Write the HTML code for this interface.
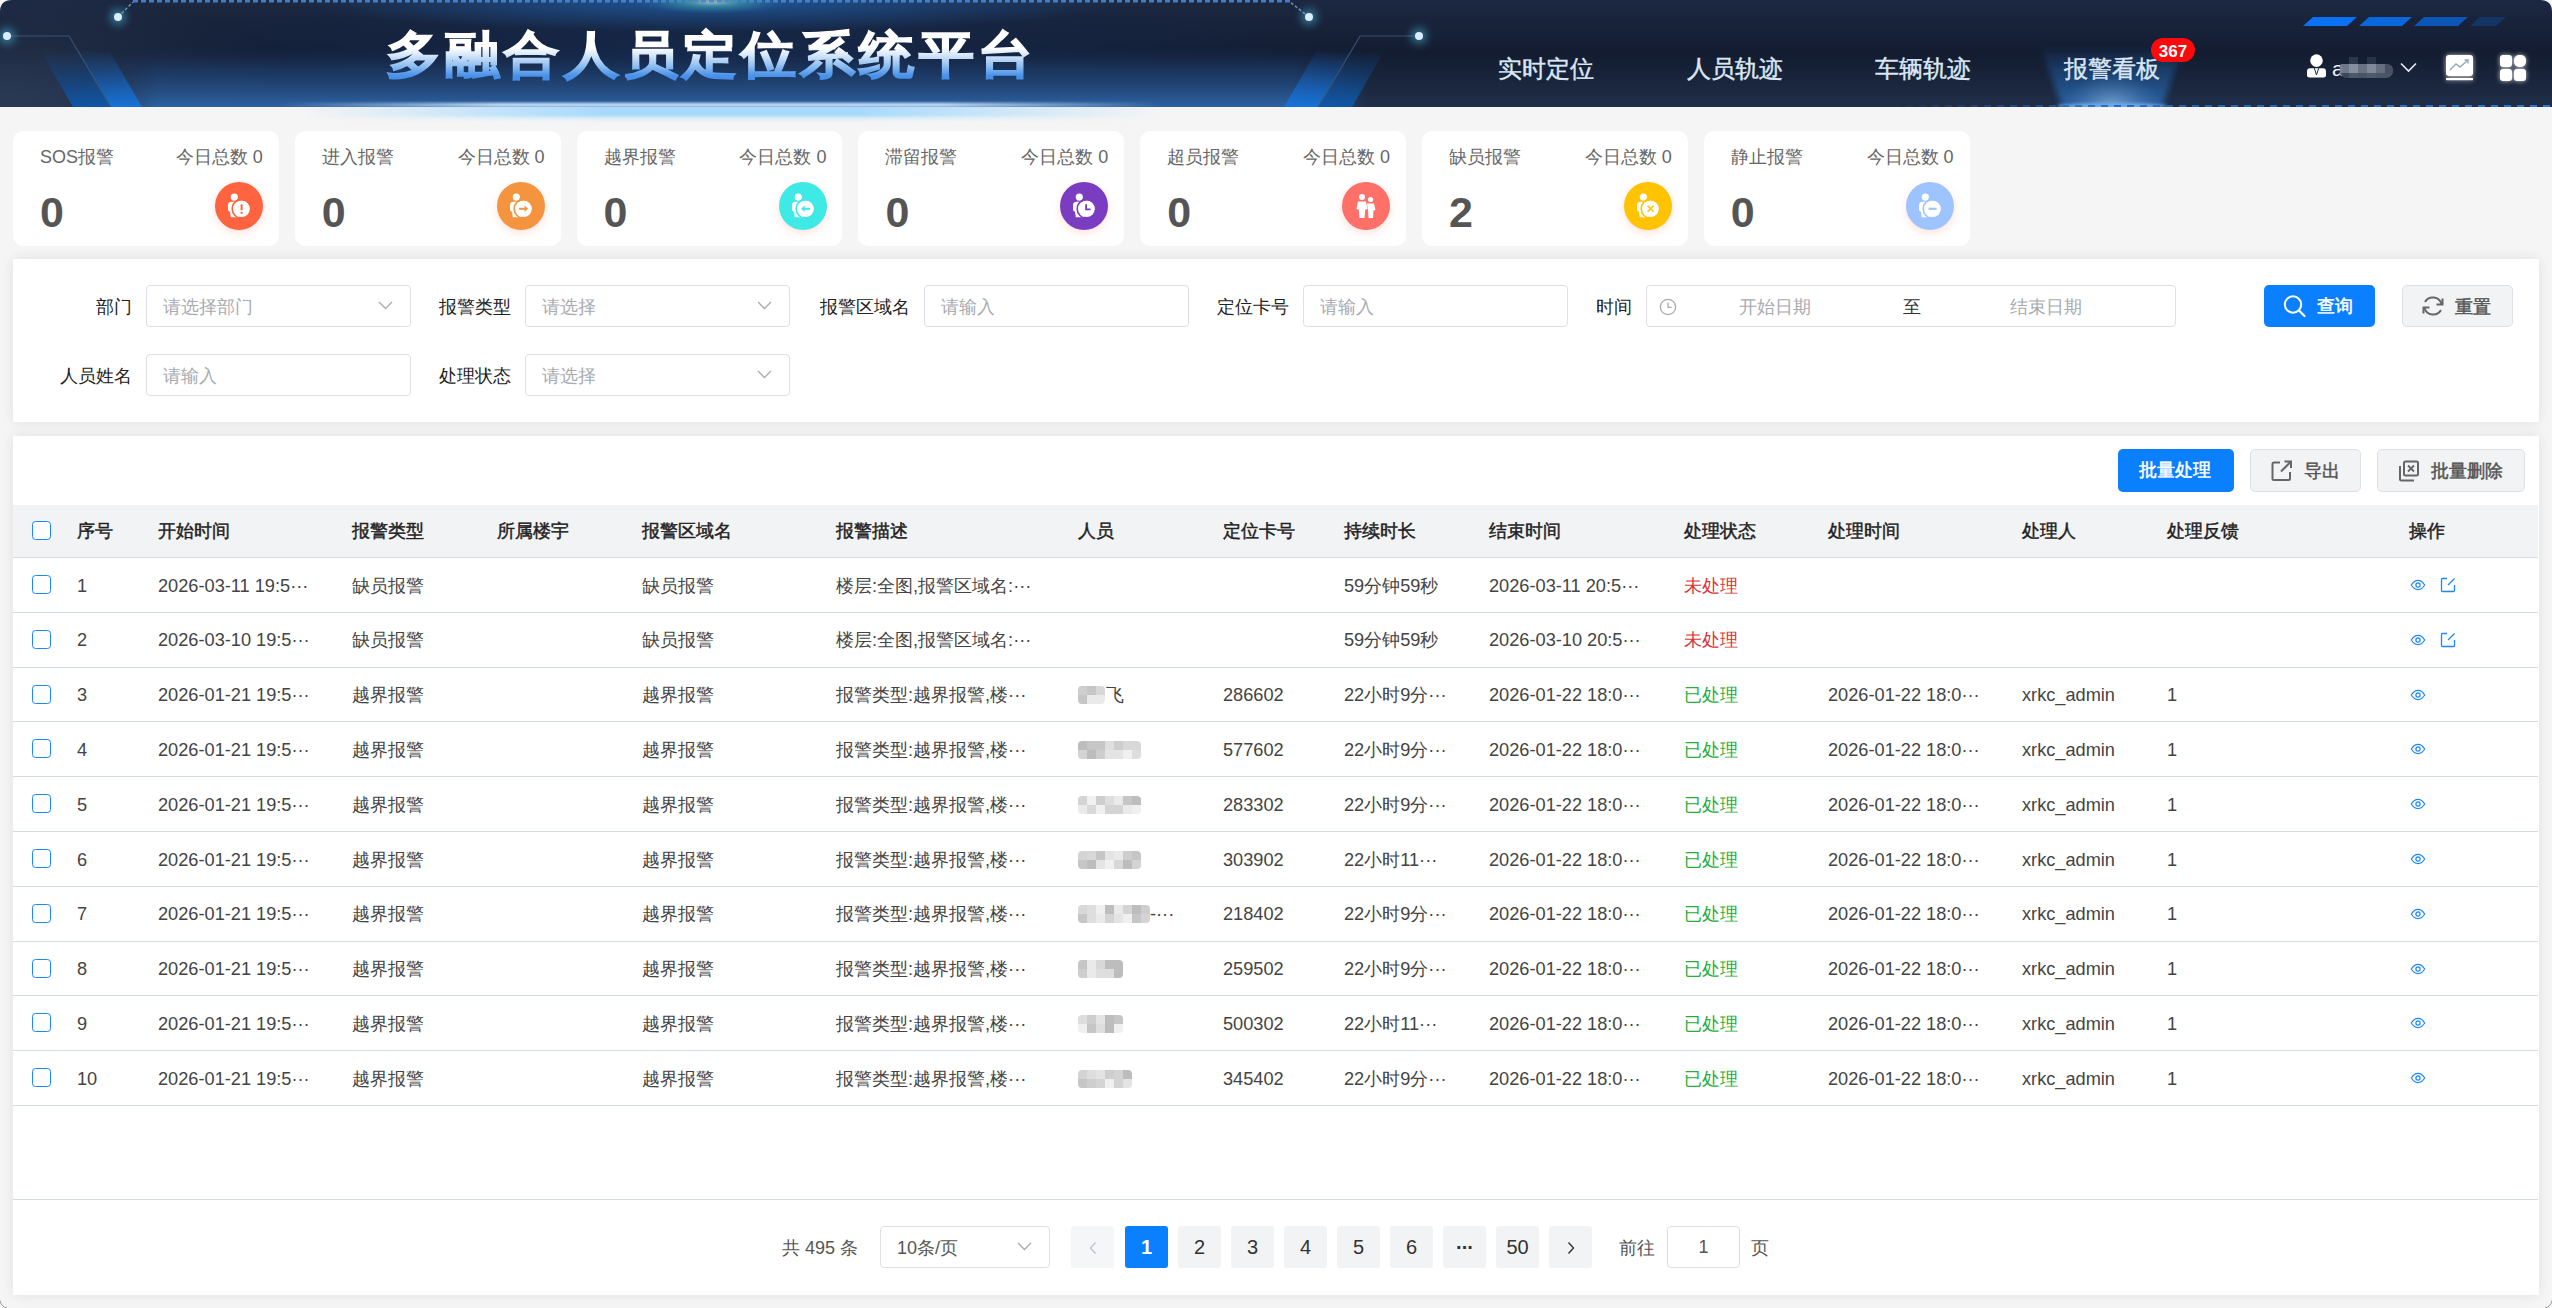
<!DOCTYPE html>
<html><head><meta charset="utf-8">
<style>
*{box-sizing:border-box;margin:0;padding:0}
html,body{width:2552px;height:1308px;overflow:hidden}
body{position:relative;background:#f5f5f5;font-family:"Liberation Sans",sans-serif;font-size:18px;color:#333}
.abs{position:absolute}
/* header */
#hdr{position:absolute;left:0;top:0;width:2552px;height:124px;overflow:visible}
.title{position:absolute;left:386px;top:23px;font-size:50px;font-weight:700;letter-spacing:3.8px;line-height:64px;white-space:nowrap;transform:scaleX(1.1);transform-origin:0 0;
 background:linear-gradient(180deg,#ffffff 0%,#ffffff 38%,#d6e7fa 50%,#8cbcf0 68%,#4b92e8 82%,#3a86e4 100%);-webkit-background-clip:text;background-clip:text;color:transparent;-webkit-text-stroke:1.4px transparent}
.nav{position:absolute;top:53px;font-size:24px;line-height:32px;color:#dbe7f5;white-space:nowrap;font-weight:400;-webkit-text-stroke:0.4px #dbe7f5}
.badge{position:absolute;left:2151px;top:38px;width:44px;height:24px;border-radius:12px;background:#fa0a0a;color:#fff;font-size:17px;font-weight:700;text-align:center;line-height:27px;overflow:hidden}
/* cards */
.card{position:absolute;top:131px;width:265.8px;height:115px;background:#fff;border-radius:10px}
.card .t{position:absolute;left:27px;top:14px;font-size:18px;line-height:24px;color:#666;white-space:nowrap}
.card .r{position:absolute;right:16px;top:14px;font-size:18px;line-height:24px;color:#666;white-space:nowrap}
.card .n{position:absolute;left:27px;top:56px;font-size:43px;line-height:50px;font-weight:700;color:#555}
.card .ic{position:absolute;left:202px;top:51px;width:48px;height:48px;border-radius:50%}
/* panels */
.panel{position:absolute;left:13px;width:2526px;background:#fff;box-shadow:0 0 12px rgba(0,0,0,.09)}
.lbl{position:absolute;font-size:18px;line-height:24px;color:#222;white-space:nowrap;text-align:right}
.inp{position:absolute;height:42px;border:1px solid #dcdfe6;border-radius:4px;background:#fff}
.ph{position:absolute;left:16px;top:9px;font-size:18px;line-height:24px;color:#a8abb2;white-space:nowrap}
.chev{position:absolute;right:17px;top:15px}
.btn{position:absolute;height:42px;border-radius:5px;white-space:nowrap;font-size:18px;line-height:24px}
/* table */
.th{position:absolute;top:0;height:52px;line-height:52px;font-size:18.2px;font-weight:400;-webkit-text-stroke:0.45px #222;color:#222;white-space:nowrap}
.row{position:absolute;left:0;width:2525px;height:54.8px;border-bottom:1px solid #d5dbe3}
.cell{position:absolute;top:1.6px;line-height:53.8px;font-size:18.2px;color:#444;white-space:nowrap}
.cb{position:absolute;left:19px;width:18.5px;height:19px;border:1.6px solid #1a86ff;border-radius:3.5px;background:#fff}
.mz{display:inline-block;position:relative;vertical-align:-3px;overflow:hidden;border-radius:4px}.mz i{position:absolute;width:9px;height:9px}
.pg{position:absolute;top:1226px;width:43px;height:42px;border-radius:3px;background:#f2f3f5;text-align:center;line-height:42px;color:#333;font-size:20px}
</style></head><body>

<!-- HEADER -->
<div id="hdr">
<svg width="2552" height="124" viewBox="0 0 2552 124" style="position:absolute;left:0;top:0">
<defs>
 <linearGradient id="hbase" x1="0" y1="0" x2="0" y2="1">
  <stop offset="0" stop-color="#1c2842"/><stop offset="0.5" stop-color="#131c30"/><stop offset="1" stop-color="#202e47"/>
 </linearGradient>
 <radialGradient id="tl" cx="0" cy="0" r="1" gradientUnits="userSpaceOnUse" gradientTransform="translate(0 100) scale(300 110)">
  <stop offset="0" stop-color="#2a3954" stop-opacity="1"/><stop offset="1" stop-color="#2a3954" stop-opacity="0"/>
 </radialGradient>
 <linearGradient id="cglow" x1="0" y1="0" x2="0" y2="1">
  <stop offset="0" stop-color="#17284a" stop-opacity="0"/><stop offset="0.4" stop-color="#1c3a66" stop-opacity=".75"/><stop offset="1" stop-color="#2d62a2" stop-opacity="1"/>
 </linearGradient>
 <linearGradient id="cgx" x1="0" y1="0" x2="1" y2="0">
  <stop offset="0" stop-color="#fff" stop-opacity="0"/><stop offset=".06" stop-color="#fff" stop-opacity="1"/><stop offset=".94" stop-color="#fff" stop-opacity="1"/><stop offset="1" stop-color="#fff" stop-opacity="0"/>
 </linearGradient>
 <mask id="cgm"><rect x="80" y="45" width="1290" height="62" fill="url(#cgx)"/></mask>
 <radialGradient id="cmid" cx="0" cy="0" r="1" gradientUnits="userSpaceOnUse" gradientTransform="translate(720 50) scale(650 60)">
  <stop offset="0" stop-color="#15284a" stop-opacity="1"/><stop offset="1" stop-color="#15284a" stop-opacity="0"/>
 </radialGradient>
 <radialGradient id="ctop" cx="0" cy="0" r="1" gradientUnits="userSpaceOnUse" gradientTransform="translate(712 2) scale(75 12)">
  <stop offset="0" stop-color="#a8b4c4" stop-opacity="1"/><stop offset=".35" stop-color="#3a94a4" stop-opacity=".8"/><stop offset="1" stop-color="#2a6aa0" stop-opacity="0"/>
 </radialGradient>
 <radialGradient id="ctop2" cx="0" cy="0" r="1" gradientUnits="userSpaceOnUse" gradientTransform="translate(712 0) scale(420 32)">
  <stop offset="0" stop-color="#1f5aa0" stop-opacity=".95"/><stop offset="1" stop-color="#1f5aa0" stop-opacity="0"/>
 </radialGradient>
 <linearGradient id="parad" x1="0" y1="0" x2="0" y2="1"><stop offset="0" stop-color="#0f4c92" stop-opacity="0"/><stop offset=".4" stop-color="#0f4c92" stop-opacity=".4"/><stop offset="1" stop-color="#0f56a8" stop-opacity="1"/></linearGradient>
 <linearGradient id="para" x1="0" y1="0" x2="0" y2="1">
  <stop offset="0" stop-color="#1672d8" stop-opacity="0"/><stop offset=".35" stop-color="#1466c4" stop-opacity=".35"/><stop offset="1" stop-color="#1672d8" stop-opacity="1"/>
 </linearGradient>
 <linearGradient id="beam" x1="0" y1="0" x2="0" y2="1">
  <stop offset="0" stop-color="#1d4f8a" stop-opacity="0"/><stop offset=".45" stop-color="#1d4f8a" stop-opacity=".65"/><stop offset="1" stop-color="#2c64a6" stop-opacity="1"/>
 </linearGradient>
 <radialGradient id="beamglow" cx="0" cy="0" r="1" gradientUnits="userSpaceOnUse" gradientTransform="translate(2112 107) scale(50 34)">
  <stop offset="0" stop-color="#9cc0e4" stop-opacity=".7"/><stop offset="1" stop-color="#4f86c0" stop-opacity="0"/>
 </radialGradient>
 <linearGradient id="below" x1="0" y1="0" x2="0" y2="1">
  <stop offset="0" stop-color="#acd6ff" stop-opacity="1"/><stop offset=".5" stop-color="#98d6fb" stop-opacity=".85"/><stop offset="1" stop-color="#e8f2fa" stop-opacity="0"/>
 </linearGradient>
 <linearGradient id="belowx" x1="0" y1="0" x2="1" y2="0">
  <stop offset="0" stop-color="#fff" stop-opacity="0"/><stop offset=".35" stop-color="#fff" stop-opacity="1"/><stop offset=".65" stop-color="#fff" stop-opacity="1"/><stop offset="1" stop-color="#fff" stop-opacity="0"/>
 </linearGradient>
 <mask id="bm"><rect x="300" y="107" width="860" height="17" fill="url(#belowx)"/></mask>
 <linearGradient id="linex" x1="0" y1="0" x2="1" y2="0">
  <stop offset="0" stop-color="#d2ecff" stop-opacity="0"/><stop offset=".25" stop-color="#d2ecff" stop-opacity="1"/><stop offset=".75" stop-color="#d2ecff" stop-opacity="1"/><stop offset="1" stop-color="#d2ecff" stop-opacity="0"/>
 </linearGradient>
 <filter id="blur2" x="-50%" y="-50%" width="200%" height="200%"><feGaussianBlur stdDeviation="1.5"/></filter>
 <filter id="blur3" x="-50%" y="-50%" width="200%" height="200%"><feGaussianBlur stdDeviation="3"/></filter>
 <filter id="blur4" x="-50%" y="-50%" width="200%" height="200%"><feGaussianBlur stdDeviation="4"/></filter>
 <linearGradient id="dashg" x1="1880" y1="0" x2="2552" y2="0" gradientUnits="userSpaceOnUse"><stop offset="0" stop-color="#1f66c0" stop-opacity="0"/><stop offset=".35" stop-color="#1f66c0" stop-opacity=".9"/><stop offset="1" stop-color="#2a78d8" stop-opacity="1"/></linearGradient>
 <clipPath id="hclip"><path d="M12 0H2540Q2552 0 2552 12V107H0V12Q0 0 12 0Z"/></clipPath>
</defs>
<g clip-path="url(#hclip)">
 <rect x="0" y="0" width="2552" height="107" fill="url(#hbase)"/>
 <rect x="0" y="0" width="700" height="107" fill="url(#tl)"/>
 <rect x="0" y="0" width="1500" height="107" fill="url(#cmid)"/>
 <rect x="80" y="45" width="1290" height="62" fill="url(#cglow)" mask="url(#cgm)"/>
 <rect x="0" y="0" width="1600" height="50" fill="url(#ctop2)"/>
 <rect x="500" y="0" width="400" height="20" fill="url(#ctop)"/>
 <!-- parallelograms -->
 <polygon points="40,50 77,50 111,107 73,107" fill="url(#parad)"/><polygon points="77,50 109,50 142,107 111,107" fill="url(#para)"/>
 <polygon points="1317,50 1351,50 1318,107 1284,107" fill="url(#para)"/><polygon points="1351,50 1385,50 1352,107 1318,107" fill="url(#parad)"/>
 <!-- thin lines -->
 <polyline points="7,36 69,36 111,107" fill="none" stroke="#3e5a80" stroke-width="1.2" opacity=".8"/>
 <polyline points="1419,36 1360,36 1318,107" fill="none" stroke="#3e5a80" stroke-width="1.2" opacity=".8"/>
 <!-- dashed top -->
 <line x1="133" y1="1.2" x2="1290" y2="1.2" stroke="#4a86cf" stroke-width="2.4" stroke-dasharray="5 3" opacity=".9"/>
 <line x1="118" y1="17" x2="133" y2="2" stroke="#6d8fb8" stroke-width="1.5" stroke-dasharray="3 2"/>
 <line x1="1309" y1="17" x2="1290" y2="2" stroke="#6d8fb8" stroke-width="1.5" stroke-dasharray="3 2"/>
 <!-- dots -->
 <g>
  <circle cx="118" cy="17" r="8" fill="#4ab4d8" opacity=".55" filter="url(#blur4)"/>
  <circle cx="118" cy="17" r="4" fill="#d8eeff"/>
  <circle cx="7" cy="36" r="8" fill="#4ab4d8" opacity=".55" filter="url(#blur4)"/>
  <circle cx="7" cy="36" r="4" fill="#d8eeff"/>
  <circle cx="1309" cy="17" r="8" fill="#4ab4d8" opacity=".55" filter="url(#blur4)"/>
  <circle cx="1309" cy="17" r="4" fill="#d8eeff"/>
  <circle cx="1419" cy="36" r="8" fill="#4ab4d8" opacity=".55" filter="url(#blur4)"/>
  <circle cx="1419" cy="36" r="4" fill="#d8eeff"/>
 </g>
 <!-- active tab beam -->
 <polygon points="2040,45 2184,45 2162,107 2062,107" fill="url(#beam)" filter="url(#blur3)"/>
 <rect x="2040" y="60" width="150" height="47" fill="url(#beamglow)"/>
 <ellipse cx="2112" cy="106" rx="55" ry="3" fill="#6aa8f0" filter="url(#blur2)"/>
 <!-- bottom bright line center -->
 <rect x="280" y="103" width="880" height="4" fill="url(#linex)" filter="url(#blur2)"/>
 <!-- right bottom line -->
 <line x1="1880" y1="106" x2="2552" y2="106" stroke="url(#dashg)" stroke-width="2.2" stroke-dasharray="7 6"/>
 <!-- stripes -->
 <polygon points="2303,26 2313,17 2357,17 2347,26" fill="#0a72f2"/>
 <polygon points="2359,26 2369,17 2412,17 2402,26" fill="#0b68dc"/>
 <polygon points="2414,26 2424,17 2468,17 2458,26" fill="#0c56b6"/>
 <polygon points="2470,26 2480,17 2506,17 2496,26" fill="#0f3d78" opacity=".7"/>
</g>
<!-- glow below header -->
<rect x="300" y="107" width="860" height="16" fill="url(#below)" mask="url(#bm)"/>
</svg>
<div class="title">多融合人员定位系统平台</div>
<div class="nav" style="left:1498px">实时定位</div>
<div class="nav" style="left:1687px">人员轨迹</div>
<div class="nav" style="left:1875px">车辆轨迹</div>
<div class="nav" style="left:2064px">报警看板</div>
<div class="badge">367</div>
<!-- user -->
<svg class="abs" style="left:2305px;top:52px" width="24" height="28" viewBox="0 0 24 28">
 <circle cx="11.5" cy="8.6" r="6.3" fill="#fff"/>
 <path d="M5 16.2H18Q21 16.2 21 19.2V23.3Q21 25.4 19 25.4H4Q2 25.4 2 23.3V19.2Q2 16.2 5 16.2Z" fill="#fff"/>
 <path d="M9.3 16.2L11.5 23L13.7 16.2" fill="none" stroke="#1b2a42" stroke-width="1"/>
</svg>
<div class="abs" style="left:2332px;top:57px;font-size:21px;line-height:24px;color:#f2f6fb;">a</div>
<div class="abs" style="left:2340px;top:57px;width:53px;height:21px;opacity:.95">
<div class="abs" style="left:9px;top:0;width:9px;height:8px;background:#2f3a4e"></div>
<div class="abs" style="left:27px;top:0;width:9px;height:8px;background:#2a3549"></div>
<div class="abs" style="left:0;top:7px;width:53px;height:14px;background:#4c5769;border-radius:2px 6px 7px 7px;overflow:hidden">
<i class="abs" style="left:0;top:0;width:9px;height:9px;background:#737d8e"></i>
<i class="abs" style="left:9px;top:0;width:9px;height:9px;background:#8a94a3"></i>
<i class="abs" style="left:18px;top:0;width:9px;height:9px;background:#6d7788"></i>
<i class="abs" style="left:27px;top:0;width:9px;height:9px;background:#858f9e"></i>
<i class="abs" style="left:36px;top:0;width:9px;height:9px;background:#6a7484"></i>
<i class="abs" style="left:45px;top:0;width:8px;height:9px;background:#4a5466"></i>
<i class="abs" style="left:0;top:9px;width:9px;height:5px;background:#3e495b"></i>
<i class="abs" style="left:9px;top:9px;width:9px;height:5px;background:#4f5a6c"></i>
<i class="abs" style="left:27px;top:9px;width:9px;height:5px;background:#525d6f"></i>
</div></div>
<svg class="abs" style="left:2400px;top:62px" width="17" height="11" viewBox="0 0 17 11"><path d="M1 1.5L8.5 9L16 1.5" fill="none" stroke="#e6eef8" stroke-width="1.6"/></svg>
<!-- chart icon -->
<svg class="abs" style="left:2442px;top:50px;filter:drop-shadow(0 0 2.5px rgba(255,255,255,.75))" width="36" height="34" viewBox="0 0 36 34">
 <g filter="url(#g1)">
 <rect x="4" y="5" width="27" height="21" rx="3" fill="#fff"/>
 <path d="M8 20L14 14L18 17L26 10" fill="none" stroke="#9aa8bb" stroke-width="1.4"/>
 <path d="M22.5 10H26V13.5" fill="none" stroke="#9aa8bb" stroke-width="1.4"/>
 <rect x="4" y="28" width="27" height="2.2" fill="#fff"/>
 </g>
</svg>
<!-- grid icon -->
<svg class="abs" style="left:2496px;top:51px;filter:drop-shadow(0 0 2.5px rgba(255,255,255,.75))" width="34" height="34" viewBox="0 0 34 34">
 <rect x="4" y="4" width="12" height="12" rx="3" fill="#fff"/>
 <rect x="18" y="4" width="12" height="12" rx="5" fill="#fff"/>
 <rect x="4" y="18" width="12" height="12" rx="3" fill="#fff"/>
 <rect x="18" y="18" width="12" height="12" rx="3" fill="#fff"/>
</svg>
</div>


<!-- CARDS -->
<div class="card" style="left:13.0px"><div class="t">SOS报警</div><div class="r">今日总数 0</div><div class="n">0</div><div class="ic" style="background:#ff6340;box-shadow:0 3px 9px rgba(255,110,80,.2)"><svg width="48" height="48" viewBox="0 0 48 48"><circle cx="19.3" cy="15.1" r="3.6" fill="#fff"/><path d="M16.5 19.8H24V35.2H15.8L15 29.8Q13 29.3 13 27.5V23.3Q13 19.8 16.5 19.8Z" fill="#fff"/><circle cx="26.6" cy="26.8" r="8.3" fill="#fff"/><circle cx="26.6" cy="26.8" r="9.4" fill="none" stroke="#ff6340" stroke-width="1.6"/><rect x="25.6" y="22.3" width="2" height="6" fill="#ff6340"/><rect x="25.6" y="29.8" width="2" height="2" fill="#ff6340"/></svg></div></div>
<div class="card" style="left:294.8px"><div class="t">进入报警</div><div class="r">今日总数 0</div><div class="n">0</div><div class="ic" style="background:#f4943e;box-shadow:0 3px 9px rgba(255,110,80,.2)"><svg width="48" height="48" viewBox="0 0 48 48"><circle cx="19.3" cy="15.1" r="3.6" fill="#fff"/><path d="M16.5 19.8H24V35.2H15.8L15 29.8Q13 29.3 13 27.5V23.3Q13 19.8 16.5 19.8Z" fill="#fff"/><circle cx="26.6" cy="26.8" r="8.3" fill="#fff"/><circle cx="26.6" cy="26.8" r="9.4" fill="none" stroke="#f4943e" stroke-width="1.6"/><path d="M22.1 26.8H28.6" stroke="#f4943e" stroke-width="2"/><path d="M27.6 23.6L31.1 26.8L27.6 30Z" fill="#f4943e"/></svg></div></div>
<div class="card" style="left:576.6px"><div class="t">越界报警</div><div class="r">今日总数 0</div><div class="n">0</div><div class="ic" style="background:#3fe9e5;box-shadow:0 3px 9px rgba(255,110,80,.2)"><svg width="48" height="48" viewBox="0 0 48 48"><circle cx="19.3" cy="15.1" r="3.6" fill="#fff"/><path d="M16.5 19.8H24V35.2H15.8L15 29.8Q13 29.3 13 27.5V23.3Q13 19.8 16.5 19.8Z" fill="#fff"/><circle cx="26.6" cy="26.8" r="8.3" fill="#fff"/><circle cx="26.6" cy="26.8" r="9.4" fill="none" stroke="#3fe9e5" stroke-width="1.6"/><path d="M24.6 26.8H31.1" stroke="#3fe9e5" stroke-width="2"/><path d="M25.6 23.6L22.1 26.8L25.6 30Z" fill="#3fe9e5"/></svg></div></div>
<div class="card" style="left:858.4px"><div class="t">滞留报警</div><div class="r">今日总数 0</div><div class="n">0</div><div class="ic" style="background:#7a3dc2;box-shadow:0 3px 9px rgba(255,110,80,.2)"><svg width="48" height="48" viewBox="0 0 48 48"><circle cx="19.3" cy="15.1" r="3.6" fill="#fff"/><path d="M16.5 19.8H24V35.2H15.8L15 29.8Q13 29.3 13 27.5V23.3Q13 19.8 16.5 19.8Z" fill="#fff"/><circle cx="26.6" cy="26.8" r="8.3" fill="#fff"/><circle cx="26.6" cy="26.8" r="9.4" fill="none" stroke="#7a3dc2" stroke-width="1.6"/><path d="M26.1 22.3V27.3H30.6" fill="none" stroke="#7a3dc2" stroke-width="1.8"/></svg></div></div>
<div class="card" style="left:1140.2px"><div class="t">超员报警</div><div class="r">今日总数 0</div><div class="n">0</div><div class="ic" style="background:#ff7068;box-shadow:0 3px 9px rgba(255,110,80,.2)"><svg width="48" height="48" viewBox="0 0 48 48"><circle cx="20" cy="15" r="3" fill="#fff"/><path d="M16 19.5H24L25.5 27L23.3 27.5L22.5 36H17.5L16.7 27.5L14.5 27Z" fill="#fff"/><circle cx="28.5" cy="17.5" r="2.6" fill="#fff"/><path d="M25 21.5H32L33.5 28L31.5 28.5L31 36H26.5L26 28.5Z" fill="#fff"/></svg></div></div>
<div class="card" style="left:1422.0px"><div class="t">缺员报警</div><div class="r">今日总数 0</div><div class="n">2</div><div class="ic" style="background:#ffc300;box-shadow:0 3px 9px rgba(255,110,80,.2)"><svg width="48" height="48" viewBox="0 0 48 48"><circle cx="19.3" cy="15.1" r="3.6" fill="#fff"/><path d="M16.5 19.8H24V35.2H15.8L15 29.8Q13 29.3 13 27.5V23.3Q13 19.8 16.5 19.8Z" fill="#fff"/><circle cx="26.6" cy="26.8" r="8.3" fill="#fff"/><circle cx="26.6" cy="26.8" r="9.4" fill="none" stroke="#ffc300" stroke-width="1.6"/><path d="M23.6 23.8L29.6 29.8M29.6 23.8L23.6 29.8" stroke="#ffc300" stroke-width="1.6"/></svg></div></div>
<div class="card" style="left:1703.8px"><div class="t">静止报警</div><div class="r">今日总数 0</div><div class="n">0</div><div class="ic" style="background:#9dc4ff;box-shadow:0 3px 9px rgba(255,110,80,.2)"><svg width="48" height="48" viewBox="0 0 48 48"><circle cx="19.3" cy="15.1" r="3.6" fill="#fff"/><path d="M16.5 19.8H24V35.2H15.8L15 29.8Q13 29.3 13 27.5V23.3Q13 19.8 16.5 19.8Z" fill="#fff"/><circle cx="26.6" cy="26.8" r="8.3" fill="#fff"/><circle cx="26.6" cy="26.8" r="9.4" fill="none" stroke="#9dc4ff" stroke-width="1.6"/><path d="M22.6 26.8H30.6" stroke="#9dc4ff" stroke-width="2.2"/></svg></div></div>

<!-- FILTER PANEL -->
<div class="panel" style="top:259px;height:163px" id="filter">
<div class="lbl" style="margin-top:1px;right:2407px;top:35px">部门</div>
<div class="inp" style="left:133px;top:26px;width:265px"><div class="ph">请选择部门</div><svg class="chev" width="15" height="9" viewBox="0 0 15 9"><path d="M1 1L7.5 7.5L14 1" fill="none" stroke="#a8abb2" stroke-width="1.4"/></svg></div>
<div class="lbl" style="margin-top:1px;right:2028px;top:35px">报警类型</div>
<div class="inp" style="left:512px;top:26px;width:265px"><div class="ph">请选择</div><svg class="chev" width="15" height="9" viewBox="0 0 15 9"><path d="M1 1L7.5 7.5L14 1" fill="none" stroke="#a8abb2" stroke-width="1.4"/></svg></div>
<div class="lbl" style="margin-top:1px;right:1629px;top:35px">报警区域名</div>
<div class="inp" style="left:911px;top:26px;width:265px"><div class="ph">请输入</div></div>
<div class="lbl" style="margin-top:1px;right:1250px;top:35px">定位卡号</div>
<div class="inp" style="left:1290px;top:26px;width:265px"><div class="ph">请输入</div></div>
<div class="lbl" style="margin-top:1px;right:907px;top:35px">时间</div>
<div class="inp" style="left:1633px;top:26px;width:530px">
<svg class="abs" style="left:12px;top:12px" width="18" height="18" viewBox="0 0 18 18"><circle cx="9" cy="9" r="7.6" fill="none" stroke="#a8abb2" stroke-width="1.3"/><path d="M9 4.5V9.3H12.6" fill="none" stroke="#a8abb2" stroke-width="1.3"/></svg>
<div class="ph" style="left:92px">开始日期</div><div class="ph" style="left:256px;color:#333">至</div><div class="ph" style="left:363px">结束日期</div></div>
<div class="btn" style="left:2251px;top:26px;width:111px;background:#0a80ff;color:#fff">
<svg class="abs" style="left:18px;top:9px" width="26" height="26" viewBox="0 0 26 26"><circle cx="11" cy="10.5" r="8.2" fill="none" stroke="#fff" stroke-width="2"/><path d="M17 16.5L22.5 22" stroke="#fff" stroke-width="2.2" stroke-linecap="round"/></svg>
<div class="abs" style="left:53px;top:9px;-webkit-text-stroke:0.5px currentColor">查询</div></div>
<div class="btn" style="left:2389px;top:26px;width:111px;background:#f2f3f5;border:1px solid #dcdfe6;color:#555">
<svg class="abs" style="left:18px;top:8px" width="24" height="24" viewBox="0 0 24 24"><path d="M20.5 10A9 9 0 0 0 4 8" fill="none" stroke="#666" stroke-width="2"/><path d="M3.5 14A9 9 0 0 0 20 16" fill="none" stroke="#666" stroke-width="2"/><path d="M21.5 4.5V10.5H15.5" fill="none" stroke="#666" stroke-width="2"/><path d="M2.5 19.5V13.5H8.5" fill="none" stroke="#666" stroke-width="2"/></svg>
<div class="abs" style="left:52px;top:9px;-webkit-text-stroke:0.5px currentColor">重置</div></div>
<div class="lbl" style="margin-top:1px;right:2407px;top:104px">人员姓名</div>
<div class="inp" style="left:133px;top:95px;width:265px"><div class="ph">请输入</div></div>
<div class="lbl" style="margin-top:1px;right:2028px;top:104px">处理状态</div>
<div class="inp" style="left:512px;top:95px;width:265px"><div class="ph">请选择</div><svg class="chev" width="15" height="9" viewBox="0 0 15 9"><path d="M1 1L7.5 7.5L14 1" fill="none" stroke="#a8abb2" stroke-width="1.4"/></svg></div>
</div>

<!-- TABLE PANEL -->
<div class="panel" style="top:436px;height:859px" id="tbl">
<div class="btn" style="left:2105px;top:13px;width:116px;height:43px;background:#0a80ff;color:#fff"><div class="abs" style="left:21px;top:9px;-webkit-text-stroke:0.5px currentColor">批量处理</div></div>
<div class="btn" style="left:2237px;top:13px;width:111px;height:43px;background:#f2f3f5;border:1px solid #dcdfe6;color:#555">
<svg class="abs" style="left:19px;top:9px" width="24" height="24" viewBox="0 0 24 24"><path d="M10 3.5H4Q2.5 3.5 2.5 5V19.5Q2.5 21 4 21H18.5Q20 21 20 19.5V13" fill="none" stroke="#666" stroke-width="2"/><path d="M11 12.5L20.5 3" stroke="#666" stroke-width="2"/><path d="M14.5 2.5H21V9" fill="none" stroke="#666" stroke-width="2"/></svg>
<div class="abs" style="left:53px;top:9px;-webkit-text-stroke:0.5px currentColor">导出</div></div>
<div class="btn" style="left:2364px;top:13px;width:148px;height:43px;background:#f2f3f5;border:1px solid #dcdfe6;color:#555">
<svg class="abs" style="left:19px;top:9px" width="24" height="24" viewBox="0 0 24 24"><rect x="7" y="2.5" width="14" height="14" rx="1.5" fill="none" stroke="#666" stroke-width="2"/><path d="M3 7V20Q3 21.5 4.5 21.5H17" fill="none" stroke="#666" stroke-width="2"/><path d="M11 6.5L17 12.5M17 6.5L11 12.5" stroke="#666" stroke-width="1.8"/></svg>
<div class="abs" style="left:53px;top:9px;-webkit-text-stroke:0.5px currentColor">批量删除</div></div>
<div class="abs" style="left:0;top:69px;width:2525px;height:695px"><div class="abs" style="left:0;top:0;width:2525px;height:53px;background:#f2f3f5;border-bottom:1px solid #d5dbe3"></div>
<div class="cb" style="top:16px"></div>
<div class="th" style="left:64px">序号</div>
<div class="th" style="left:145px">开始时间</div>
<div class="th" style="left:339px">报警类型</div>
<div class="th" style="left:484px">所属楼宇</div>
<div class="th" style="left:629px">报警区域名</div>
<div class="th" style="left:823px">报警描述</div>
<div class="th" style="left:1065px">人员</div>
<div class="th" style="left:1210px">定位卡号</div>
<div class="th" style="left:1331px">持续时长</div>
<div class="th" style="left:1476px">结束时间</div>
<div class="th" style="left:1671px">处理状态</div>
<div class="th" style="left:1815px">处理时间</div>
<div class="th" style="left:2009px">处理人</div>
<div class="th" style="left:2154px">处理反馈</div>
<div class="th" style="left:2396px">操作</div>
<div class="row" style="top:53.0px"><div class="cb" style="top:17px"></div><div class="cell" style="left:64px;">1</div><div class="cell" style="left:145px;">2026-03-11 19:5···</div><div class="cell" style="left:339px;">缺员报警</div><div class="cell" style="left:629px;">缺员报警</div><div class="cell" style="left:823px;">楼层:全图,报警区域名:···</div><div class="cell" style="left:1331px;">59分钟59秒</div><div class="cell" style="left:1476px;">2026-03-11 20:5···</div><div class="cell" style="left:1671px;color:#d9343b">未处理</div><div class="abs" style="left:2397px;top:17px"><svg width="16" height="12" viewBox="0 0 16 12"><path d="M1.3 6Q4.2 1.4 8 1.4Q11.8 1.4 14.7 6Q11.8 10.6 8 10.6Q4.2 10.6 1.3 6Z" fill="none" stroke="#1a86ff" stroke-width="1.2"/><circle cx="8" cy="6" r="2.1" fill="none" stroke="#1a86ff" stroke-width="1.2"/></svg></div><div class="abs" style="left:2427px;top:19px"><svg width="16" height="16" viewBox="0 0 16 16"><path d="M7 1.5H2.5Q1.5 1.5 1.5 2.5V13.5Q1.5 14.5 2.5 14.5H13.5Q14.5 14.5 14.5 13.5V8" fill="none" stroke="#1a86ff" stroke-width="1.3"/><path d="M8 8L14.5 1.5" stroke="#1a86ff" stroke-width="1.3"/></svg></div></div>
<div class="row" style="top:107.8px"><div class="cb" style="top:17px"></div><div class="cell" style="left:64px;">2</div><div class="cell" style="left:145px;">2026-03-10 19:5···</div><div class="cell" style="left:339px;">缺员报警</div><div class="cell" style="left:629px;">缺员报警</div><div class="cell" style="left:823px;">楼层:全图,报警区域名:···</div><div class="cell" style="left:1331px;">59分钟59秒</div><div class="cell" style="left:1476px;">2026-03-10 20:5···</div><div class="cell" style="left:1671px;color:#d9343b">未处理</div><div class="abs" style="left:2397px;top:17px"><svg width="16" height="12" viewBox="0 0 16 12"><path d="M1.3 6Q4.2 1.4 8 1.4Q11.8 1.4 14.7 6Q11.8 10.6 8 10.6Q4.2 10.6 1.3 6Z" fill="none" stroke="#1a86ff" stroke-width="1.2"/><circle cx="8" cy="6" r="2.1" fill="none" stroke="#1a86ff" stroke-width="1.2"/></svg></div><div class="abs" style="left:2427px;top:19px"><svg width="16" height="16" viewBox="0 0 16 16"><path d="M7 1.5H2.5Q1.5 1.5 1.5 2.5V13.5Q1.5 14.5 2.5 14.5H13.5Q14.5 14.5 14.5 13.5V8" fill="none" stroke="#1a86ff" stroke-width="1.3"/><path d="M8 8L14.5 1.5" stroke="#1a86ff" stroke-width="1.3"/></svg></div></div>
<div class="row" style="top:162.6px"><div class="cb" style="top:17px"></div><div class="cell" style="left:64px;">3</div><div class="cell" style="left:145px;">2026-01-21 19:5···</div><div class="cell" style="left:339px;">越界报警</div><div class="cell" style="left:629px;">越界报警</div><div class="cell" style="left:823px;">报警类型:越界报警,楼···</div><div class="cell" style="left:1065px;"><span class="mz" style="width:27px;height:18px"><i style="left:0px;top:0px;background:#cecece"></i><i style="left:9px;top:0px;background:#c6c6c6"></i><i style="left:18px;top:0px;background:#d8d8d8"></i><i style="left:0px;top:9px;background:#c6c6c6"></i><i style="left:9px;top:9px;background:#eaeaea"></i><i style="left:18px;top:9px;background:#eaeaea"></i></span><span style="margin-left:1px">飞</span></div><div class="cell" style="left:1210px;">286602</div><div class="cell" style="left:1331px;">22小时9分···</div><div class="cell" style="left:1476px;">2026-01-22 18:0···</div><div class="cell" style="left:1671px;color:#27ad3a">已处理</div><div class="cell" style="left:1815px;">2026-01-22 18:0···</div><div class="cell" style="left:2009px;">xrkc_admin</div><div class="cell" style="left:2154px;">1</div><div class="abs" style="left:2397px;top:17px"><svg width="16" height="12" viewBox="0 0 16 12"><path d="M1.3 6Q4.2 1.4 8 1.4Q11.8 1.4 14.7 6Q11.8 10.6 8 10.6Q4.2 10.6 1.3 6Z" fill="none" stroke="#1a86ff" stroke-width="1.2"/><circle cx="8" cy="6" r="2.1" fill="none" stroke="#1a86ff" stroke-width="1.2"/></svg></div></div>
<div class="row" style="top:217.4px"><div class="cb" style="top:17px"></div><div class="cell" style="left:64px;">4</div><div class="cell" style="left:145px;">2026-01-21 19:5···</div><div class="cell" style="left:339px;">越界报警</div><div class="cell" style="left:629px;">越界报警</div><div class="cell" style="left:823px;">报警类型:越界报警,楼···</div><div class="cell" style="left:1065px;"><span class="mz" style="width:63px;height:18px"><i style="left:0px;top:0px;background:#bdbdbd"></i><i style="left:9px;top:0px;background:#c6c6c6"></i><i style="left:18px;top:0px;background:#c6c6c6"></i><i style="left:27px;top:0px;background:#dedede"></i><i style="left:36px;top:0px;background:#cecece"></i><i style="left:45px;top:0px;background:#d8d8d8"></i><i style="left:54px;top:0px;background:#d8d8d8"></i><i style="left:0px;top:9px;background:#d4d4d4"></i><i style="left:9px;top:9px;background:#bdbdbd"></i><i style="left:18px;top:9px;background:#cecece"></i><i style="left:27px;top:9px;background:#e4e4e4"></i><i style="left:36px;top:9px;background:#e4e4e4"></i><i style="left:45px;top:9px;background:#f0f0f0"></i><i style="left:54px;top:9px;background:#dedede"></i></span></div><div class="cell" style="left:1210px;">577602</div><div class="cell" style="left:1331px;">22小时9分···</div><div class="cell" style="left:1476px;">2026-01-22 18:0···</div><div class="cell" style="left:1671px;color:#27ad3a">已处理</div><div class="cell" style="left:1815px;">2026-01-22 18:0···</div><div class="cell" style="left:2009px;">xrkc_admin</div><div class="cell" style="left:2154px;">1</div><div class="abs" style="left:2397px;top:17px"><svg width="16" height="12" viewBox="0 0 16 12"><path d="M1.3 6Q4.2 1.4 8 1.4Q11.8 1.4 14.7 6Q11.8 10.6 8 10.6Q4.2 10.6 1.3 6Z" fill="none" stroke="#1a86ff" stroke-width="1.2"/><circle cx="8" cy="6" r="2.1" fill="none" stroke="#1a86ff" stroke-width="1.2"/></svg></div></div>
<div class="row" style="top:272.2px"><div class="cb" style="top:17px"></div><div class="cell" style="left:64px;">5</div><div class="cell" style="left:145px;">2026-01-21 19:5···</div><div class="cell" style="left:339px;">越界报警</div><div class="cell" style="left:629px;">越界报警</div><div class="cell" style="left:823px;">报警类型:越界报警,楼···</div><div class="cell" style="left:1065px;"><span class="mz" style="width:63px;height:18px"><i style="left:0px;top:0px;background:#d4d4d4"></i><i style="left:9px;top:0px;background:#f0f0f0"></i><i style="left:18px;top:0px;background:#cecece"></i><i style="left:27px;top:0px;background:#dedede"></i><i style="left:36px;top:0px;background:#eaeaea"></i><i style="left:45px;top:0px;background:#c6c6c6"></i><i style="left:54px;top:0px;background:#bdbdbd"></i><i style="left:0px;top:9px;background:#eaeaea"></i><i style="left:9px;top:9px;background:#d8d8d8"></i><i style="left:18px;top:9px;background:#f0f0f0"></i><i style="left:27px;top:9px;background:#d4d4d4"></i><i style="left:36px;top:9px;background:#d4d4d4"></i><i style="left:45px;top:9px;background:#eaeaea"></i><i style="left:54px;top:9px;background:#f0f0f0"></i></span></div><div class="cell" style="left:1210px;">283302</div><div class="cell" style="left:1331px;">22小时9分···</div><div class="cell" style="left:1476px;">2026-01-22 18:0···</div><div class="cell" style="left:1671px;color:#27ad3a">已处理</div><div class="cell" style="left:1815px;">2026-01-22 18:0···</div><div class="cell" style="left:2009px;">xrkc_admin</div><div class="cell" style="left:2154px;">1</div><div class="abs" style="left:2397px;top:17px"><svg width="16" height="12" viewBox="0 0 16 12"><path d="M1.3 6Q4.2 1.4 8 1.4Q11.8 1.4 14.7 6Q11.8 10.6 8 10.6Q4.2 10.6 1.3 6Z" fill="none" stroke="#1a86ff" stroke-width="1.2"/><circle cx="8" cy="6" r="2.1" fill="none" stroke="#1a86ff" stroke-width="1.2"/></svg></div></div>
<div class="row" style="top:327.0px"><div class="cb" style="top:17px"></div><div class="cell" style="left:64px;">6</div><div class="cell" style="left:145px;">2026-01-21 19:5···</div><div class="cell" style="left:339px;">越界报警</div><div class="cell" style="left:629px;">越界报警</div><div class="cell" style="left:823px;">报警类型:越界报警,楼···</div><div class="cell" style="left:1065px;"><span class="mz" style="width:63px;height:18px"><i style="left:0px;top:0px;background:#d4d4d4"></i><i style="left:9px;top:0px;background:#d8d8d8"></i><i style="left:18px;top:0px;background:#c6c6c6"></i><i style="left:27px;top:0px;background:#e4e4e4"></i><i style="left:36px;top:0px;background:#eaeaea"></i><i style="left:45px;top:0px;background:#cecece"></i><i style="left:54px;top:0px;background:#c6c6c6"></i><i style="left:0px;top:9px;background:#c6c6c6"></i><i style="left:9px;top:9px;background:#bdbdbd"></i><i style="left:18px;top:9px;background:#e4e4e4"></i><i style="left:27px;top:9px;background:#f0f0f0"></i><i style="left:36px;top:9px;background:#d8d8d8"></i><i style="left:45px;top:9px;background:#bdbdbd"></i><i style="left:54px;top:9px;background:#d4d4d4"></i></span></div><div class="cell" style="left:1210px;">303902</div><div class="cell" style="left:1331px;">22小时11···</div><div class="cell" style="left:1476px;">2026-01-22 18:0···</div><div class="cell" style="left:1671px;color:#27ad3a">已处理</div><div class="cell" style="left:1815px;">2026-01-22 18:0···</div><div class="cell" style="left:2009px;">xrkc_admin</div><div class="cell" style="left:2154px;">1</div><div class="abs" style="left:2397px;top:17px"><svg width="16" height="12" viewBox="0 0 16 12"><path d="M1.3 6Q4.2 1.4 8 1.4Q11.8 1.4 14.7 6Q11.8 10.6 8 10.6Q4.2 10.6 1.3 6Z" fill="none" stroke="#1a86ff" stroke-width="1.2"/><circle cx="8" cy="6" r="2.1" fill="none" stroke="#1a86ff" stroke-width="1.2"/></svg></div></div>
<div class="row" style="top:381.8px"><div class="cb" style="top:17px"></div><div class="cell" style="left:64px;">7</div><div class="cell" style="left:145px;">2026-01-21 19:5···</div><div class="cell" style="left:339px;">越界报警</div><div class="cell" style="left:629px;">越界报警</div><div class="cell" style="left:823px;">报警类型:越界报警,楼···</div><div class="cell" style="left:1065px;"><span class="mz" style="width:72px;height:18px"><i style="left:0px;top:0px;background:#d8d8d8"></i><i style="left:9px;top:0px;background:#dedede"></i><i style="left:18px;top:0px;background:#f0f0f0"></i><i style="left:27px;top:0px;background:#bdbdbd"></i><i style="left:36px;top:0px;background:#eaeaea"></i><i style="left:45px;top:0px;background:#d4d4d4"></i><i style="left:54px;top:0px;background:#bdbdbd"></i><i style="left:63px;top:0px;background:#cecece"></i><i style="left:0px;top:9px;background:#c6c6c6"></i><i style="left:9px;top:9px;background:#dedede"></i><i style="left:18px;top:9px;background:#eaeaea"></i><i style="left:27px;top:9px;background:#d4d4d4"></i><i style="left:36px;top:9px;background:#e4e4e4"></i><i style="left:45px;top:9px;background:#f0f0f0"></i><i style="left:54px;top:9px;background:#c6c6c6"></i><i style="left:63px;top:9px;background:#d4d4d4"></i></span><span>-···</span></div><div class="cell" style="left:1210px;">218402</div><div class="cell" style="left:1331px;">22小时9分···</div><div class="cell" style="left:1476px;">2026-01-22 18:0···</div><div class="cell" style="left:1671px;color:#27ad3a">已处理</div><div class="cell" style="left:1815px;">2026-01-22 18:0···</div><div class="cell" style="left:2009px;">xrkc_admin</div><div class="cell" style="left:2154px;">1</div><div class="abs" style="left:2397px;top:17px"><svg width="16" height="12" viewBox="0 0 16 12"><path d="M1.3 6Q4.2 1.4 8 1.4Q11.8 1.4 14.7 6Q11.8 10.6 8 10.6Q4.2 10.6 1.3 6Z" fill="none" stroke="#1a86ff" stroke-width="1.2"/><circle cx="8" cy="6" r="2.1" fill="none" stroke="#1a86ff" stroke-width="1.2"/></svg></div></div>
<div class="row" style="top:436.6px"><div class="cb" style="top:17px"></div><div class="cell" style="left:64px;">8</div><div class="cell" style="left:145px;">2026-01-21 19:5···</div><div class="cell" style="left:339px;">越界报警</div><div class="cell" style="left:629px;">越界报警</div><div class="cell" style="left:823px;">报警类型:越界报警,楼···</div><div class="cell" style="left:1065px;"><span class="mz" style="width:45px;height:18px"><i style="left:0px;top:0px;background:#c6c6c6"></i><i style="left:9px;top:0px;background:#eaeaea"></i><i style="left:18px;top:0px;background:#d8d8d8"></i><i style="left:27px;top:0px;background:#bdbdbd"></i><i style="left:36px;top:0px;background:#bdbdbd"></i><i style="left:0px;top:9px;background:#cecece"></i><i style="left:9px;top:9px;background:#eaeaea"></i><i style="left:18px;top:9px;background:#dedede"></i><i style="left:27px;top:9px;background:#dedede"></i><i style="left:36px;top:9px;background:#bdbdbd"></i></span></div><div class="cell" style="left:1210px;">259502</div><div class="cell" style="left:1331px;">22小时9分···</div><div class="cell" style="left:1476px;">2026-01-22 18:0···</div><div class="cell" style="left:1671px;color:#27ad3a">已处理</div><div class="cell" style="left:1815px;">2026-01-22 18:0···</div><div class="cell" style="left:2009px;">xrkc_admin</div><div class="cell" style="left:2154px;">1</div><div class="abs" style="left:2397px;top:17px"><svg width="16" height="12" viewBox="0 0 16 12"><path d="M1.3 6Q4.2 1.4 8 1.4Q11.8 1.4 14.7 6Q11.8 10.6 8 10.6Q4.2 10.6 1.3 6Z" fill="none" stroke="#1a86ff" stroke-width="1.2"/><circle cx="8" cy="6" r="2.1" fill="none" stroke="#1a86ff" stroke-width="1.2"/></svg></div></div>
<div class="row" style="top:491.4px"><div class="cb" style="top:17px"></div><div class="cell" style="left:64px;">9</div><div class="cell" style="left:145px;">2026-01-21 19:5···</div><div class="cell" style="left:339px;">越界报警</div><div class="cell" style="left:629px;">越界报警</div><div class="cell" style="left:823px;">报警类型:越界报警,楼···</div><div class="cell" style="left:1065px;"><span class="mz" style="width:45px;height:18px"><i style="left:0px;top:0px;background:#dedede"></i><i style="left:9px;top:0px;background:#cecece"></i><i style="left:18px;top:0px;background:#e4e4e4"></i><i style="left:27px;top:0px;background:#bdbdbd"></i><i style="left:36px;top:0px;background:#c6c6c6"></i><i style="left:0px;top:9px;background:#f0f0f0"></i><i style="left:9px;top:9px;background:#c6c6c6"></i><i style="left:18px;top:9px;background:#dedede"></i><i style="left:27px;top:9px;background:#bdbdbd"></i><i style="left:36px;top:9px;background:#f0f0f0"></i></span></div><div class="cell" style="left:1210px;">500302</div><div class="cell" style="left:1331px;">22小时11···</div><div class="cell" style="left:1476px;">2026-01-22 18:0···</div><div class="cell" style="left:1671px;color:#27ad3a">已处理</div><div class="cell" style="left:1815px;">2026-01-22 18:0···</div><div class="cell" style="left:2009px;">xrkc_admin</div><div class="cell" style="left:2154px;">1</div><div class="abs" style="left:2397px;top:17px"><svg width="16" height="12" viewBox="0 0 16 12"><path d="M1.3 6Q4.2 1.4 8 1.4Q11.8 1.4 14.7 6Q11.8 10.6 8 10.6Q4.2 10.6 1.3 6Z" fill="none" stroke="#1a86ff" stroke-width="1.2"/><circle cx="8" cy="6" r="2.1" fill="none" stroke="#1a86ff" stroke-width="1.2"/></svg></div></div>
<div class="row" style="top:546.2px"><div class="cb" style="top:17px"></div><div class="cell" style="left:64px;">10</div><div class="cell" style="left:145px;">2026-01-21 19:5···</div><div class="cell" style="left:339px;">越界报警</div><div class="cell" style="left:629px;">越界报警</div><div class="cell" style="left:823px;">报警类型:越界报警,楼···</div><div class="cell" style="left:1065px;"><span class="mz" style="width:54px;height:18px"><i style="left:0px;top:0px;background:#d4d4d4"></i><i style="left:9px;top:0px;background:#dedede"></i><i style="left:18px;top:0px;background:#e4e4e4"></i><i style="left:27px;top:0px;background:#cecece"></i><i style="left:36px;top:0px;background:#d4d4d4"></i><i style="left:45px;top:0px;background:#bdbdbd"></i><i style="left:0px;top:9px;background:#c6c6c6"></i><i style="left:9px;top:9px;background:#cecece"></i><i style="left:18px;top:9px;background:#d4d4d4"></i><i style="left:27px;top:9px;background:#f0f0f0"></i><i style="left:36px;top:9px;background:#d4d4d4"></i><i style="left:45px;top:9px;background:#e4e4e4"></i></span></div><div class="cell" style="left:1210px;">345402</div><div class="cell" style="left:1331px;">22小时9分···</div><div class="cell" style="left:1476px;">2026-01-22 18:0···</div><div class="cell" style="left:1671px;color:#27ad3a">已处理</div><div class="cell" style="left:1815px;">2026-01-22 18:0···</div><div class="cell" style="left:2009px;">xrkc_admin</div><div class="cell" style="left:2154px;">1</div><div class="abs" style="left:2397px;top:17px"><svg width="16" height="12" viewBox="0 0 16 12"><path d="M1.3 6Q4.2 1.4 8 1.4Q11.8 1.4 14.7 6Q11.8 10.6 8 10.6Q4.2 10.6 1.3 6Z" fill="none" stroke="#1a86ff" stroke-width="1.2"/><circle cx="8" cy="6" r="2.1" fill="none" stroke="#1a86ff" stroke-width="1.2"/></svg></div></div>
<div class="abs" style="left:0;top:694px;width:2525px;height:1px;background:#d5dbe3"></div></div>
<div class="abs" style="left:769px;top:800px;font-size:18px;line-height:24px;color:#555;white-space:nowrap">共 495 条</div>
<div class="inp" style="left:867px;top:790px;width:170px"><div class="ph" style="color:#555">10条/页</div><svg class="chev" width="15" height="9" viewBox="0 0 15 9"><path d="M1 1L7.5 7.5L14 1" fill="none" stroke="#a8abb2" stroke-width="1.4"/></svg></div>
<div class="pg" style="left:1058px;top:790px;background:#f5f6f8"><svg width="10" height="14" viewBox="0 0 10 14" style="vertical-align:-1px"><path d="M7.5 1.5L2.5 7L7.5 12.5" fill="none" stroke="#c0c4cc" stroke-width="1.4"/></svg></div>
<div class="pg" style="left:1112px;top:790px;background:#0a80ff;color:#fff;font-weight:700">1</div>
<div class="pg" style="left:1165px;top:790px;">2</div>
<div class="pg" style="left:1218px;top:790px;">3</div>
<div class="pg" style="left:1271px;top:790px;">4</div>
<div class="pg" style="left:1324px;top:790px;">5</div>
<div class="pg" style="left:1377px;top:790px;">6</div>
<div class="pg" style="left:1430px;top:790px;"><span style="font-weight:700;letter-spacing:-1px">···</span></div>
<div class="pg" style="left:1483px;top:790px;">50</div>
<div class="pg" style="left:1536px;top:790px;"><svg width="10" height="14" viewBox="0 0 10 14" style="vertical-align:-1px"><path d="M2.5 1.5L7.5 7L2.5 12.5" fill="none" stroke="#333" stroke-width="1.4"/></svg></div>
<div class="abs" style="left:1606px;top:800px;font-size:18px;line-height:24px;color:#555">前往</div>
<div class="inp" style="left:1654px;top:790px;width:73px;text-align:center;line-height:40px;color:#555;font-size:18px">1</div>
<div class="abs" style="left:1738px;top:800px;font-size:18px;line-height:24px;color:#555">页</div>
</div>

<svg class="abs" style="left:0;top:1290px" width="20" height="18" viewBox="0 0 20 18"><path d="M0 18V10.5A9 9 0 0 0 7 18Z" fill="#fafafa"/><path d="M0 10.5A9 9 0 0 0 7 18" fill="none" stroke="#9a9a9a" stroke-width="1"/></svg>
<svg class="abs" style="left:2532px;top:1290px" width="20" height="18" viewBox="0 0 20 18"><path d="M20 18V10.5A9 9 0 0 1 13 18Z" fill="#fafafa"/><path d="M20 10.5A9 9 0 0 1 13 18" fill="none" stroke="#9a9a9a" stroke-width="1"/></svg>
</body></html>
